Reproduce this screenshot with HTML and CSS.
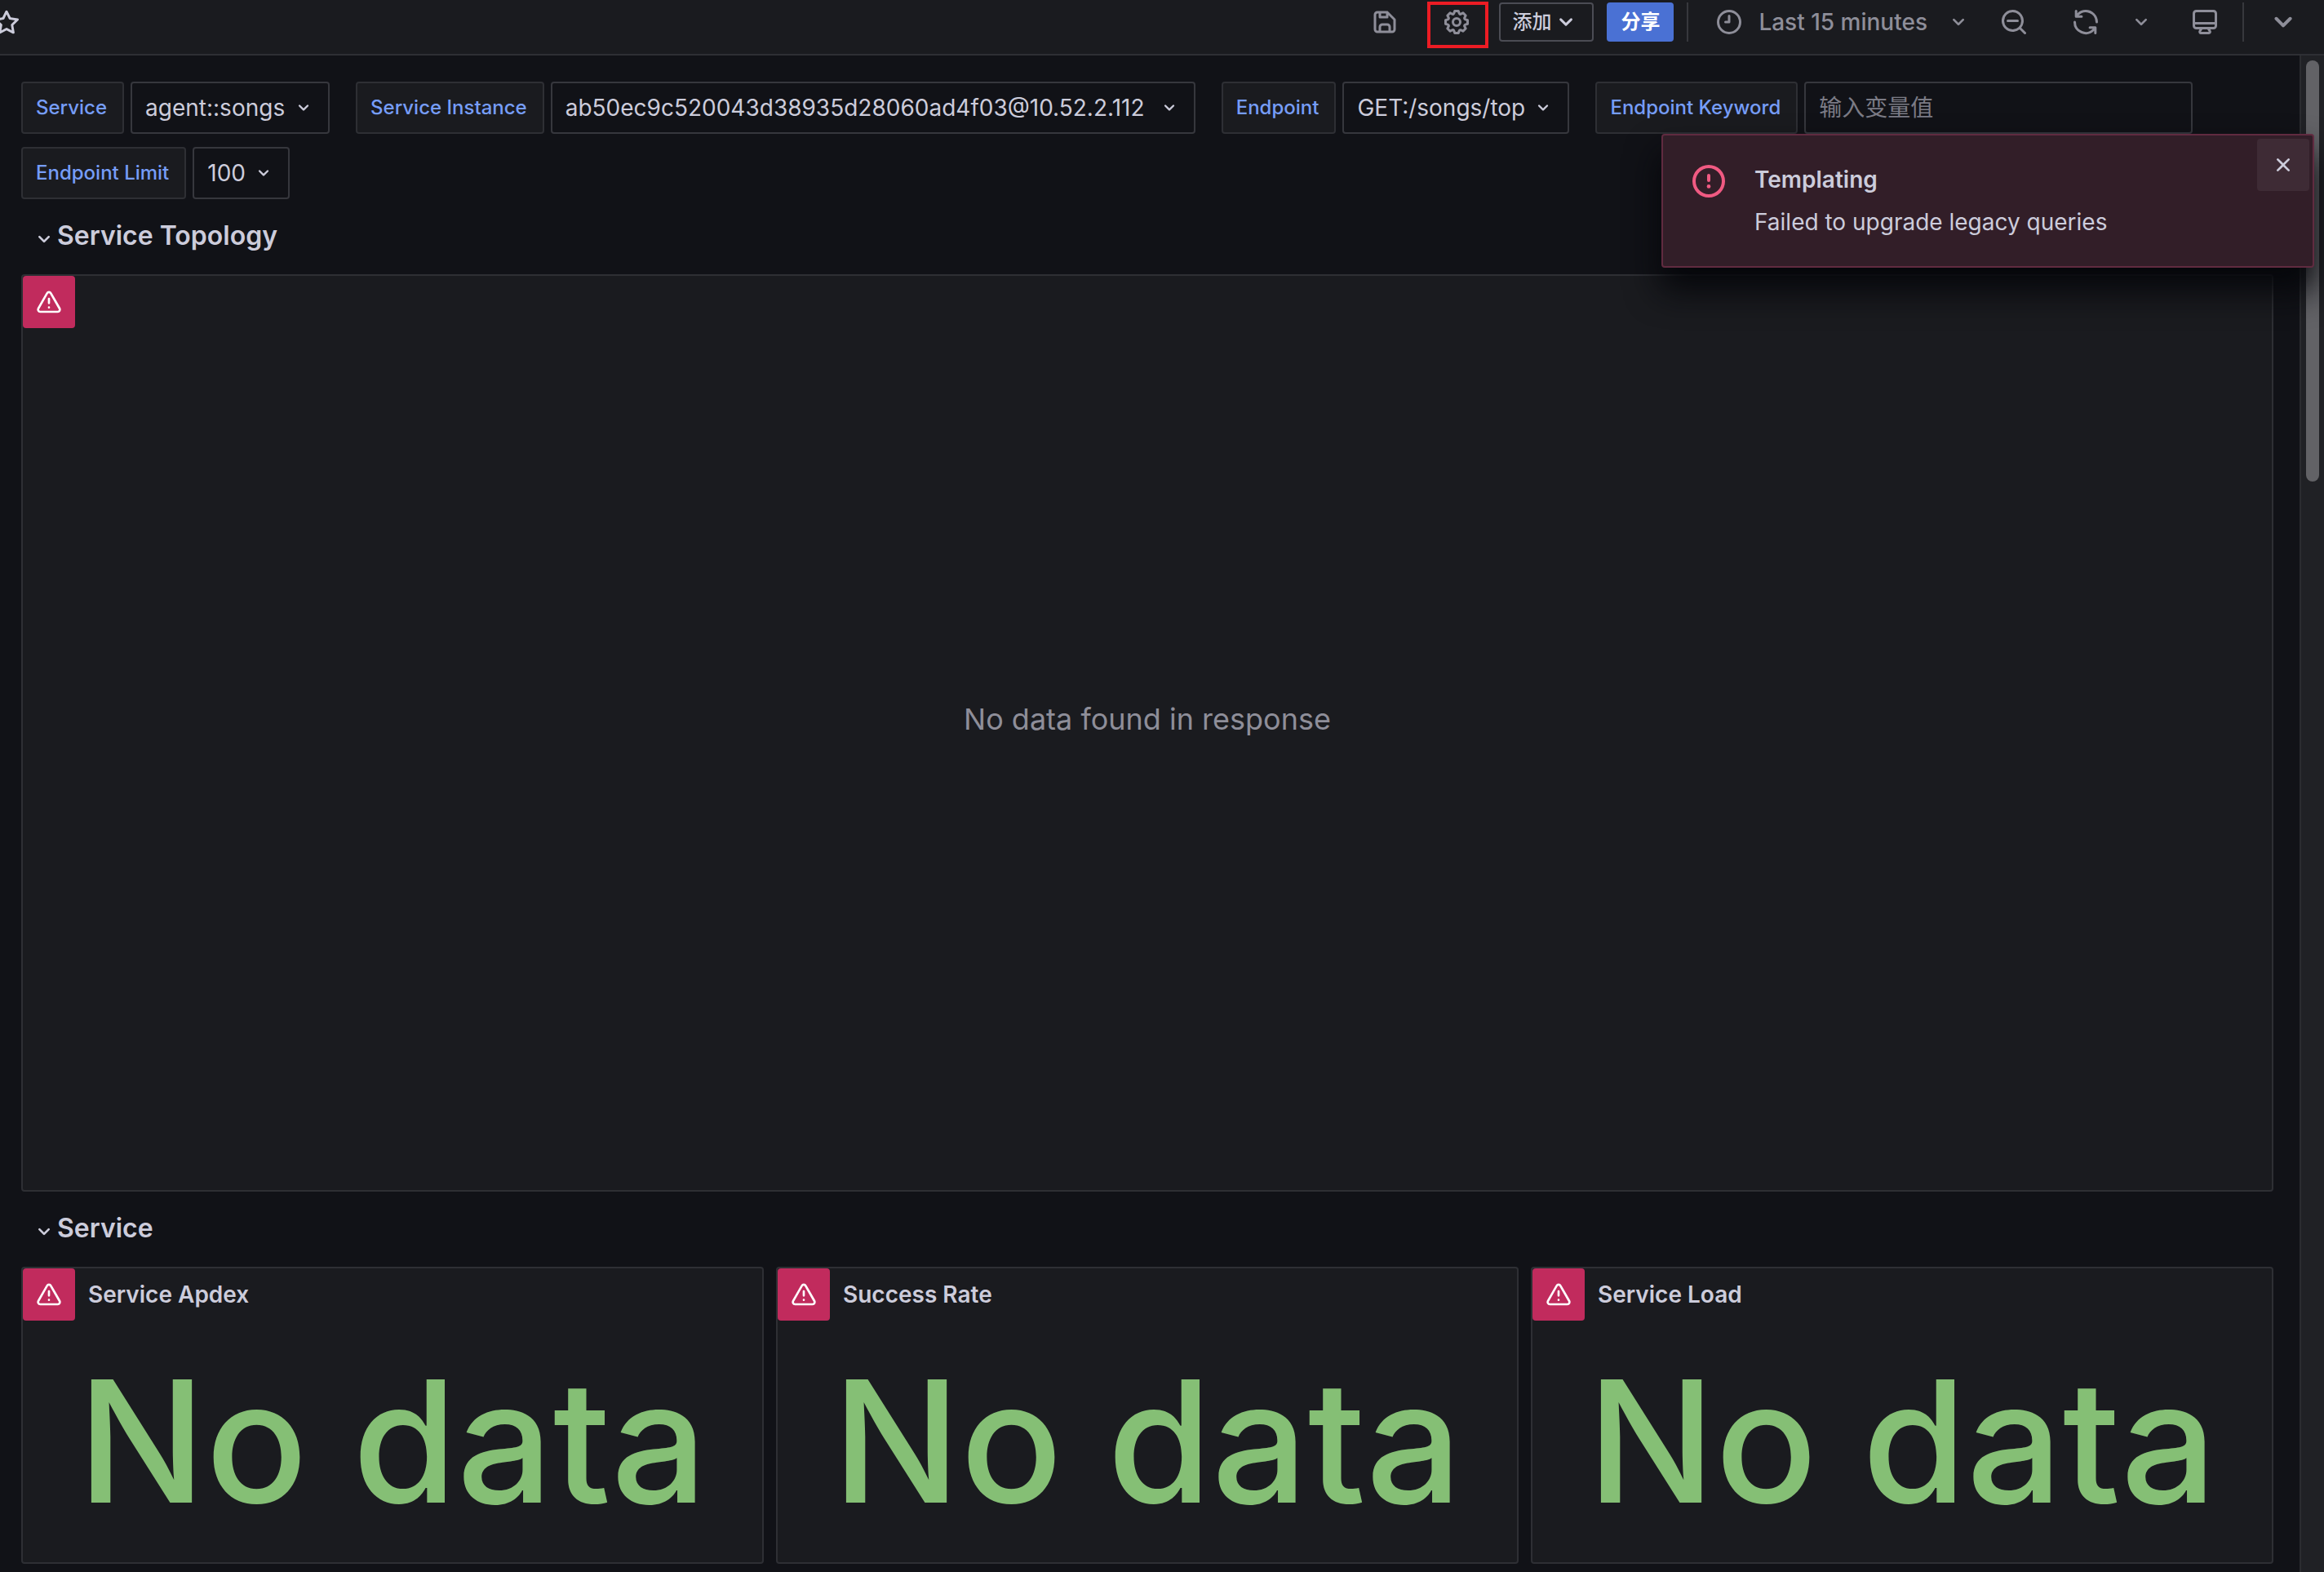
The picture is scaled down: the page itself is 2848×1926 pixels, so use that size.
FILE: index.html
```html
<!DOCTYPE html>
<html lang="zh-CN">
<head>
<meta charset="utf-8">
<title>Service dashboard</title>
<link rel="stylesheet" href="styles.css">
</head>
<body>
<svg class="sprite" aria-hidden="true">
  <symbol id="angle-down" viewBox="0 0 24 24"><path d="M17,9.17a1,1,0,0,0-1.41,0L12,12.71,8.46,9.17a1,1,0,0,0-1.41,0,1,1,0,0,0,0,1.42l4.24,4.24a1,1,0,0,0,1.42,0L17,10.59A1,1,0,0,0,17,9.17Z"/></symbol>
  <symbol id="star" viewBox="0 0 24 24"><path d="M22,9.67A1,1,0,0,0,21.14,9l-5.69-.83L12.9,3a1,1,0,0,0-1.8,0L8.55,8.16,2.86,9a1,1,0,0,0-.81.68,1,1,0,0,0,.25,1l4.13,4-1,5.68A1,1,0,0,0,6.9,21.44L12,18.77l5.1,2.67a.93.93,0,0,0,.46.12,1,1,0,0,0,.59-.19,1,1,0,0,0,.4-1l-1-5.68,4.13-4A1,1,0,0,0,22,9.67Zm-6.15,4a1,1,0,0,0-.29.88l.72,4.2-3.76-2a1.06,1.06,0,0,0-.94,0l-3.76,2,.72-4.2a1,1,0,0,0-.29-.88l-3-3,4.21-.61a1,1,0,0,0,.76-.55L12,5.7l1.88,3.82a1,1,0,0,0,.76.55l4.21.61Z"/></symbol>
  <symbol id="save" viewBox="0 0 24 24"><path d="M20.71,9.29l-6-6a1,1,0,0,0-.32-.21A1.09,1.09,0,0,0,14,3H6A3,3,0,0,0,3,6V18a3,3,0,0,0,3,3H18a3,3,0,0,0,3-3V10A1,1,0,0,0,20.71,9.29ZM9,5h4V7H9Zm6,14H9V16a1,1,0,0,1,1-1h4a1,1,0,0,1,1,1Zm4-1a1,1,0,0,1-1,1H17V16a3,3,0,0,0-3-3H10a3,3,0,0,0-3,3v3H6a1,1,0,0,1-1-1V6A1,1,0,0,1,6,5H7V8A1,1,0,0,0,8,9h6a1,1,0,0,0,1-1V6.41l4,4Z"/></symbol>
  <symbol id="cog" viewBox="0 0 24 24"><path d="M21.32,9.55l-1.89-.63.89-1.78A1,1,0,0,0,20.13,6L18,3.87a1,1,0,0,0-1.15-.19l-1.78.89-.63-1.89A1,1,0,0,0,13.5,2h-3a1,1,0,0,0-.95.68L8.92,4.57,7.14,3.68A1,1,0,0,0,6,3.87L3.87,6a1,1,0,0,0-.19,1.15l.89,1.78-1.89.63A1,1,0,0,0,2,10.5v3a1,1,0,0,0,.68.95l1.89.63-.89,1.78A1,1,0,0,0,3.87,18L6,20.13a1,1,0,0,0,1.15.19l1.78-.89.63,1.89a1,1,0,0,0,.95.68h3a1,1,0,0,0,.95-.68l.63-1.89,1.78.89A1,1,0,0,0,18,20.13L20.13,18a1,1,0,0,0,.19-1.15l-.89-1.78,1.89-.63A1,1,0,0,0,22,13.5v-3A1,1,0,0,0,21.32,9.55ZM20,12.78l-1.2.4A2,2,0,0,0,17.64,16l.57,1.14-1.1,1.1L16,17.64a2,2,0,0,0-2.79,1.16l-.4,1.2H11.22l-.4-1.2A2,2,0,0,0,8,17.64l-1.14.57-1.1-1.1L6.36,16A2,2,0,0,0,5.2,13.18L4,12.78V11.22l1.2-.4A2,2,0,0,0,6.36,8L5.79,6.89l1.1-1.1L8,6.36A2,2,0,0,0,10.82,5.2l.4-1.2h1.56l.4,1.2A2,2,0,0,0,16,6.36l1.14-.57,1.1,1.1L17.64,8a2,2,0,0,0,1.16,2.79l1.2.4ZM12,8a4,4,0,1,0,4,4A4,4,0,0,0,12,8Zm0,6a2,2,0,1,1,2-2A2,2,0,0,1,12,14Z"/></symbol>
  <symbol id="clock" viewBox="0 0 24 24"><path d="M12,6a1,1,0,0,0-1,1v4H9a1,1,0,0,0,0,2h3a1,1,0,0,0,1-1V7A1,1,0,0,0,12,6Zm0-4A10,10,0,1,0,22,12,10,10,0,0,0,12,2Zm0,18a8,8,0,1,1,8-8A8,8,0,0,1,12,20Z"/></symbol>
  <symbol id="zoom-out" viewBox="0 0 24 24"><path d="M21.71,20.29,18,16.61A9,9,0,1,0,16.61,18l3.68,3.68a1,1,0,0,0,1.42,0A1,1,0,0,0,21.71,20.29ZM11,18a7,7,0,1,1,7-7A7,7,0,0,1,11,18ZM15,10H7a1,1,0,0,0,0,2h8a1,1,0,0,0,0-2Z"/></symbol>
  <symbol id="sync" viewBox="0 0 24 24"><path d="M19.91,15.51H15.38a1,1,0,0,0,0,2h2.4A8,8,0,0,1,4,12a1,1,0,1,0-2,0,10,10,0,0,0,16.88,7.23V21a1,1,0,0,0,2,0V16.5A1,1,0,0,0,19.91,15.51ZM12,2A10,10,0,0,0,5.12,4.77V3a1,1,0,0,0-2,0V7.5a1,1,0,0,0,1,1h4.5a1,1,0,0,0,0-2H6.22A8,8,0,0,1,20,12a1,1,0,0,0,2,0A10,10,0,0,0,12,2Z"/></symbol>
  <symbol id="monitor" viewBox="0 0 24 24"><path d="M19,2H5A3,3,0,0,0,2,5V15a3,3,0,0,0,3,3H7.64l-.58,1a2,2,0,0,0,0,2,2,2,0,0,0,1.75,1h6.46A2,2,0,0,0,17,21a2,2,0,0,0,0-2l-.59-1H19a3,3,0,0,0,3-3V5A3,3,0,0,0,19,2ZM8.77,20,10,18H14l1.2,2ZM20,15a1,1,0,0,1-1,1H5a1,1,0,0,1-1-1V14H20Zm0-3H4V5A1,1,0,0,1,5,4H19a1,1,0,0,1,1,1Z"/></symbol>
  <symbol id="warning" viewBox="0 0 24 24"><path d="M12,16a1,1,0,1,0,1,1A1,1,0,0,0,12,16Zm10.67,1.47-8.05-14a3,3,0,0,0-5.24,0l-8,14A3,3,0,0,0,3.94,22H20.06a3,3,0,0,0,2.61-4.53Zm-1.73,2a1,1,0,0,1-.88.51H3.94a1,1,0,0,1-.88-.51,1,1,0,0,1,0-1l8-14a1,1,0,0,1,1.78,0l8.05,14A1,1,0,0,1,20.94,19.49ZM12,8a1,1,0,0,0-1,1v4a1,1,0,0,0,2,0V9A1,1,0,0,0,12,8Z"/></symbol>
  <symbol id="error" viewBox="0 0 24 24"><path fill-rule="evenodd" d="M12,2A10,10,0,1,0,22,12,10,10,0,0,0,12,2Zm0,18a8,8,0,1,1,8-8A8,8,0,0,1,12,20Z"/><path d="M12,7.500a1,1,0,0,0-1,1v3a1,1,0,0,0,2,0v-3a1,1,0,0,0-1-1Zm0,6.500a1.200,1.200,0,1,0,1.200,1.200A1.200,1.200,0,0,0,12,14Z"/></symbol>
  <symbol id="times" viewBox="0 0 24 24"><path d="M13.41,12l4.3-4.29a1,1,0,1,0-1.42-1.42L12,10.59,7.71,6.29A1,1,0,0,0,6.29,7.71L10.59,12l-4.3,4.29a1,1,0,0,0,0,1.42,1,1,0,0,0,1.42,0L12,13.41l4.29,4.3a1,1,0,0,0,1.42,0,1,1,0,0,0,0-1.42Z"/></symbol>
</svg>

<header class="toolbar">
  <button class="star-button" type="button" aria-label="Star"><svg class="icon-36"><use href="#star"/></svg></button>
  <div class="toolbar-actions">
    <button class="tool" type="button" aria-label="Save"><svg class="icon-36"><use href="#save"/></svg></button>
    <button class="tool tool-marked" type="button" aria-label="Settings"><svg class="icon-36"><use href="#cog"/></svg></button>
    <button class="add-button" type="button">添加<svg class="icon-36"><use href="#angle-down"/></svg></button>
    <button class="share-button" type="button">分享</button>
    <span class="separator"></span>
    <div class="tool-group">
      <button class="time-button" type="button"><svg class="icon-36"><use href="#clock"/></svg>Last 15 minutes<svg class="icon-32 time-caret"><use href="#angle-down"/></svg></button>
      <button class="tool" type="button" aria-label="Zoom out"><svg class="icon-36"><use href="#zoom-out"/></svg></button>
    </div>
    <div class="tool-group">
      <button class="tool" type="button" aria-label="Refresh"><svg class="icon-36"><use href="#sync"/></svg></button>
      <button class="tool tool-caret" type="button" aria-label="Refresh interval"><svg class="icon-32"><use href="#angle-down"/></svg></button>
    </div>
    <button class="tool tool-narrow" type="button" aria-label="Kiosk mode"><svg class="icon-36"><use href="#monitor"/></svg></button>
    <span class="separator"></span>
    <button class="tool tool-caret" type="button" aria-label="Toggle top bar"><svg class="icon-48"><use href="#angle-down"/></svg></button>
  </div>
</header>

<div class="viewport">
  <main class="dashboard">
    <form class="variables">
      <div class="variable">
        <label for="var-service">Service</label>
        <div class="picker"><select id="var-service"><option>agent::songs</option></select><svg class="icon-28"><use href="#angle-down"/></svg></div>
      </div>
      <div class="variable">
        <label for="var-instance">Service Instance</label>
        <div class="picker picker-wide"><select id="var-instance"><option>ab50ec9c520043d38935d28060ad4f03@10.52.2.112</option></select><svg class="icon-28"><use href="#angle-down"/></svg></div>
      </div>
      <div class="variable">
        <label for="var-endpoint">Endpoint</label>
        <div class="picker"><select id="var-endpoint"><option>GET:/songs/top</option></select><svg class="icon-28"><use href="#angle-down"/></svg></div>
      </div>
      <div class="variable">
        <label for="var-keyword">Endpoint Keyword</label>
        <input id="var-keyword" type="text" placeholder="输入变量值">
      </div>
      <div class="variable">
        <label for="var-limit">Endpoint Limit</label>
        <div class="picker"><select id="var-limit"><option>100</option></select><svg class="icon-28"><use href="#angle-down"/></svg></div>
      </div>
    </form>

    <h2 class="row-title"><button type="button"><svg class="icon-32"><use href="#angle-down"/></svg>Service Topology</button></h2>
    <section class="panel panel-topology">
      <div class="panel-header"><button class="panel-error" type="button" aria-label="Panel error"><svg class="icon-32"><use href="#warning"/></svg></button></div>
      <p class="panel-empty">No data found in response</p>
    </section>

    <h2 class="row-title"><button type="button"><svg class="icon-32"><use href="#angle-down"/></svg>Service</button></h2>
    <div class="stats">
      <section class="panel panel-stat">
        <div class="panel-header"><button class="panel-error" type="button" aria-label="Panel error"><svg class="icon-32"><use href="#warning"/></svg></button><h3>Service Apdex</h3></div>
        <p class="stat-value">No data</p>
      </section>
      <section class="panel panel-stat">
        <div class="panel-header"><button class="panel-error" type="button" aria-label="Panel error"><svg class="icon-32"><use href="#warning"/></svg></button><h3>Success Rate</h3></div>
        <p class="stat-value">No data</p>
      </section>
      <section class="panel panel-stat">
        <div class="panel-header"><button class="panel-error" type="button" aria-label="Panel error"><svg class="icon-32"><use href="#warning"/></svg></button><h3>Service Load</h3></div>
        <p class="stat-value">No data</p>
      </section>
    </div>
  </main>
  <div class="scroll-track"><div class="scroll-thumb"></div></div>
</div>

<div class="alert" role="alert">
  <svg class="icon-48 alert-icon"><use href="#error"/></svg>
  <div class="alert-text">
    <strong>Templating</strong>
    <p>Failed to upgrade legacy queries</p>
  </div>
  <button class="alert-close" type="button" aria-label="Close alert"><svg class="icon-32"><use href="#times"/></svg></button>
</div>
</body>
</html>
```
FILE: styles.css
```css
:root {
  --canvas: #111217;
  --surface: #1a1b1f;
  --line: #2e2f34;
  --line-strong: #36373d;
  --text: #ccccdb;
  --text-muted: #8e8e99;
  --link: #769df8;
  --error: #c12b5d;
}

* {
  box-sizing: border-box;
}

body {
  position: relative;
  display: flex;
  flex-direction: column;
  min-height: 100vh;
  margin: 0;
  overflow-x: hidden;
  background: var(--canvas);
  color: var(--text);
  font-family: Inter, "Noto Sans CJK SC", sans-serif;
  font-size: 28px;
  line-height: 44px;
}

button,
input,
select {
  margin: 0;
  padding: 0;
  border: 0;
  background: none;
  color: inherit;
  font: inherit;
}

h2,
h3,
p {
  margin: 0;
  font: inherit;
}

svg {
  flex: none;
  fill: currentColor;
}

.sprite {
  position: absolute;
  width: 0;
  height: 0;
}

.icon-28 { width: 28px; height: 28px; }
.icon-32 { width: 32px; height: 32px; }
.icon-36 { width: 36px; height: 36px; }
.icon-48 { width: 48px; height: 48px; }

/* Toolbar */
.toolbar {
  display: flex;
  align-items: center;
  justify-content: space-between;
  padding: 3px 18px 15px 0;
  border-bottom: 2px solid var(--line);
  background: var(--surface);
}

.star-button {
  display: flex;
  margin-left: -10px;
}

.toolbar-actions {
  display: flex;
  gap: 16px;
  height: 48px;
  color: var(--text-muted);
}

.tool-group {
  display: flex;
}

.tool {
  position: relative;
  display: flex;
  align-items: center;
  justify-content: center;
  width: 72px;
}

.tool-narrow { width: 60px; }
.tool-caret { width: 64px; }

.tool-marked::after {
  content: "";
  position: absolute;
  inset: -1px -3px -8px 0;
  border: 4px solid #ec1c24;
}

.add-button,
.share-button {
  display: flex;
  align-items: center;
  border-radius: 4px;
  font-size: 24px;
  font-weight: 500;
}

.add-button {
  padding: 0 14px;
  border: 2px solid #4b4c54;
  color: var(--text);
}

.share-button {
  padding: 0 17px;
  background: #4a71d4;
  color: #fff;
  font-weight: 700;
}

.separator {
  width: 2px;
  background: #37383d;
}

.time-button {
  display: flex;
  align-items: center;
  gap: 18px;
  padding: 0 16px;
  font-weight: 500;
}

.time-caret {
  margin-left: 4px;
}

/* Content and scrollbar */
.viewport {
  display: flex;
  flex: 1;
}

.dashboard {
  flex: 1;
  min-width: 0;
  padding: 32px 32px 10px 26px;
}

.scroll-track {
  width: 30px;
  padding: 6px 6px 0;
  border-left: 2px solid #2b2c30;
  background: #202125;
}

.scroll-thumb {
  width: 16px;
  height: 516px;
  border-radius: 8px;
  background: #626266;
}

/* Variables */
.variables {
  display: flex;
  flex-wrap: wrap;
  gap: 16px 32px;
}

.variable {
  display: flex;
  gap: 8px;
  height: 64px;
}

.variable label {
  display: flex;
  align-items: center;
  padding: 0 19px 0 16px;
  border: 2px solid var(--line);
  border-radius: 4px;
  background: var(--surface);
  color: var(--link);
  font-size: 24px;
  font-weight: 500;
}

.picker {
  position: relative;
  display: flex;
}

.picker-wide {
  width: 790px;
}

.picker select {
  flex: 1;
  appearance: none;
  padding: 0 52px 0 16px;
  border: 2px solid var(--line-strong);
  border-radius: 4px;
}

.picker svg {
  position: absolute;
  top: 18px;
  right: 18px;
  pointer-events: none;
}

.variable input {
  width: 476px;
  padding: 0 16px;
  border: 2px solid var(--line-strong);
  border-radius: 4px;
}

.variable input::placeholder {
  color: #7b7b85;
  opacity: 1;
}

/* Rows and panels */
.row-title {
  margin: 25px 0 27px 12px;
  font-size: 32px;
  font-weight: 600;
  line-height: 40px;
}

.row-title button {
  display: flex;
  align-items: flex-end;
}

.panel {
  display: flex;
  flex-direction: column;
  border: 2px solid var(--line);
  border-radius: 4px;
  background: var(--surface);
}

.panel-topology { height: 1124px; }
.panel-stat { height: 364px; }

.panel-header {
  display: flex;
  align-items: center;
  gap: 16px;
  height: 64px;
}

.panel-header h3 {
  font-weight: 600;
}

.panel-error {
  display: flex;
  align-items: center;
  justify-content: center;
  width: 64px;
  height: 64px;
  border-radius: 4px;
  background: var(--error);
  color: #fff;
}

.panel-empty,
.stat-value {
  display: flex;
  flex: 1;
  align-items: center;
  justify-content: center;
}

.panel-empty {
  padding-bottom: 98px;
  color: var(--text-muted);
  font-size: 36px;
}

.stats {
  display: grid;
  grid-template-columns: repeat(3, 1fr);
  gap: 15px;
}

.stat-value {
  color: #85bf75;
  font-size: 207px;
  font-weight: 500;
  line-height: 240px;
}

/* Alert */
.alert {
  position: absolute;
  top: 164px;
  right: 12px;
  display: flex;
  width: 800px;
  padding: 32px;
  gap: 32px;
  border: 2px solid #602b40;
  border-radius: 4px;
  background: #321e28;
  box-shadow: 0 26px 40px 2px #06070b;
}

.alert-icon {
  color: #f05a82;
}

.alert-text strong {
  display: block;
  font-weight: 600;
}

.alert-text p {
  margin-top: 8px;
}

.alert-close {
  position: absolute;
  top: 4px;
  right: 4px;
  display: flex;
  align-items: center;
  justify-content: center;
  width: 64px;
  height: 64px;
  border-radius: 4px;
  background: #3e2b35;
}
```
